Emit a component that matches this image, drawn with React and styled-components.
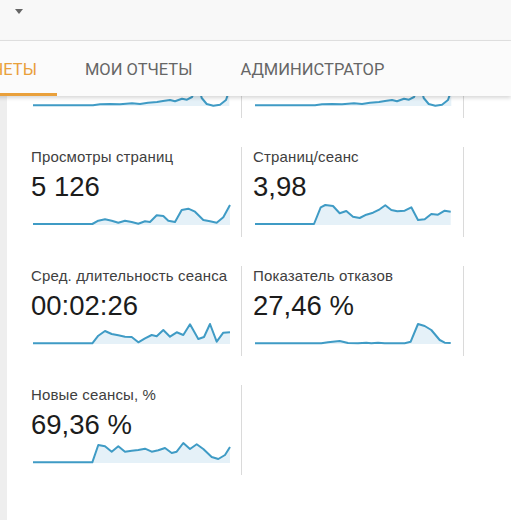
import React from "react";
import styled, { createGlobalStyle } from "styled-components";

const GlobalStyle = createGlobalStyle`
  html, body {
    margin: 0;
    padding: 0;
    background: #ffffff;
    font-family: "Liberation Sans", Arial, sans-serif;
  }
`;

const rowZeroLeft = [
  [0, 30.3], [60, 30.3], [67, 29.3], [77, 29], [87, 29.3], [99, 28.3], [107, 29],
  [115, 27.7], [124, 27], [130, 26], [137, 25], [142, 26.3], [149, 23.7], [154, 24.7],
  [159, 22], [162, 15], [166, 12], [168.7, 23], [173.7, 29], [180.3, 30.7],
  [187, 29.7], [193, 25], [196.3, 15],
];

const rowZeroRight = rowZeroLeft.map(([x, y]) => [x, y]);

const metrics = [
  { label: "Сеансы", value: "1 288", points: rowZeroLeft },
  { label: "Пользователи", value: "1 050", points: rowZeroRight },
  {
    label: "Просмотры страниц",
    value: "5 126",
    points: [
      [0, 30], [59.3, 30], [65.3, 26.7], [72, 25.3], [78.7, 26.7], [85.3, 28.7],
      [92, 26.7], [98.7, 28], [105.3, 29.7], [112, 27.3], [117, 28], [123.7, 21.3],
      [130.3, 22], [135.3, 26.7], [142, 28], [148.7, 16], [155.3, 14.7], [162, 17.7],
      [170.3, 26], [177, 27.3], [183.7, 28.7], [190.3, 23.3], [197, 11],
    ],
  },
  {
    label: "Страниц/сеанс",
    value: "3,98",
    points: [
      [0, 30], [59, 30], [65.7, 13.3], [70.3, 11], [78, 12], [84.7, 19.3], [91.3, 17],
      [98, 22.7], [104.7, 24], [111.3, 20.7], [118, 18.7], [124.7, 15.3], [130.3, 11.3],
      [136.3, 16], [142.3, 17.3], [149.7, 16.7], [156.3, 13.3], [163, 26], [169.7, 25.3],
      [176.3, 20], [183, 20.7], [189.7, 16.7], [195.7, 17.7],
    ],
  },
  {
    label: "Сред. длительность сеанса",
    value: "00:02:26",
    points: [
      [0, 30.3], [59.3, 30.3], [65.3, 22.7], [72, 18], [78.7, 21], [85.3, 22.3],
      [92, 23.7], [98.7, 24], [105.3, 29.3], [112, 25.3], [118.7, 22], [123.7, 23.3],
      [130.3, 17], [137, 23.7], [143.7, 19.3], [150.3, 22], [157, 11.3], [165.3, 26],
      [171, 24], [177, 11], [183.7, 28.7], [190.3, 19.7], [197, 19.3],
    ],
  },
  {
    label: "Показатель отказов",
    value: "27,46 %",
    points: [
      [0, 30.3], [66.3, 30.3], [73, 29.3], [84.7, 28], [93, 30], [103, 30.3],
      [111.3, 29.7], [116.3, 30.3], [123, 29.7], [129.7, 30.3], [149.7, 30.3],
      [155.7, 28.7], [163, 11], [169.7, 13], [176.3, 17], [184.7, 27], [189.7, 29.7],
      [195.7, 30],
    ],
  },
  {
    label: "Новые сеансы, %",
    value: "69,36 %",
    points: [
      [0, 30.3], [59.3, 30.3], [65.3, 13], [72, 14.3], [78.7, 19.7], [85.3, 14.3],
      [92, 19.7], [98.7, 18.7], [105.3, 18], [112, 16.7], [118.7, 19.7], [125.3, 18.3],
      [132, 16], [138.7, 21], [143.7, 19.7], [150.3, 11], [157, 17], [163.7, 12.3],
      [170.3, 17], [178.7, 25], [185.3, 27], [192, 23], [197, 15],
    ],
  },
];

const tabs = [
  { title: "Отчеты", active: true },
  { title: "Мои отчеты" },
  { title: "Администратор" },
];

const Sparkline = ({ points }) => {
  const line = points.map(([x, y], i) => `${i ? "L" : "M"}${x},${y}`).join(" ");
  const last = points[points.length - 1];
  const area = `${line} L${last[0]},31 L${points[0][0]},31 Z`;
  return (
    <SparkSvg width="198" height="26" viewBox="0 6 198 26">
      <path d={area} fill="#e5f1f8" />
      <path d={line} fill="none" stroke="#3f9bc5" strokeWidth="2" strokeLinejoin="round" />
    </SparkSvg>
  );
};

const App = () => {
  return (
    <Page>
      <GlobalStyle />
      <TopBar>
        <Caret />
      </TopBar>
      <TabBar>
        {tabs.map((t) => (
          <Tab key={t.title} $active={t.active}>
            {t.title}
          </Tab>
        ))}
      </TabBar>
      <Content>
        <Gutter />
        <Scroller>
          <Grid>
            {metrics.map((m) => (
              <Card key={m.label}>
                <Label>{m.label}</Label>
                <Value>{m.value}</Value>
                <Sparkline points={m.points} />
              </Card>
            ))}
          </Grid>
        </Scroller>
      </Content>
    </Page>
  );
};

const Page = styled.div`
  width: 511px;
  height: 520px;
  overflow: hidden;
  display: flex;
  flex-direction: column;
  background: #ffffff;
`;

const TopBar = styled.div`
  height: 41px;
  flex-shrink: 0;
  box-sizing: border-box;
  background: #f8f8f8;
  border-bottom: 1px solid #e2e2e2;
  padding: 9px 0 0 15px;
`;

const Caret = styled.span`
  display: block;
  width: 0;
  height: 0;
  border-left: 4.5px solid transparent;
  border-right: 4.5px solid transparent;
  border-top: 5px solid #666666;
`;

const TabBar = styled.nav`
  position: relative;
  z-index: 1;
  height: 55px;
  flex-shrink: 0;
  display: flex;
  gap: 8px;
  margin-left: -49px;
  background: #fbfbfb;
  box-shadow: 0 2px 4px rgba(0, 0, 0, 0.16);
`;

const Tab = styled.div`
  display: flex;
  align-items: center;
  padding: 5px 20px 0;
  font-family: Roboto, "Liberation Sans", sans-serif;
  font-size: 16.5px;
  text-transform: uppercase;
  white-space: nowrap;
  color: ${(p) => (p.$active ? "#e9a03b" : "#666666")};
  border-bottom: 3px solid ${(p) => (p.$active ? "#e9a03b" : "transparent")};
`;

const Content = styled.div`
  flex: 1;
  display: flex;
  overflow: hidden;
`;

const Gutter = styled.div`
  width: 7px;
  flex-shrink: 0;
  background: #eeeeee;
`;

const Scroller = styled.div`
  flex: 1;
  padding-left: 13px;
`;

const Grid = styled.div`
  display: grid;
  grid-template-columns: 222px 222px;
  row-gap: 29px;
  margin-top: -68px;
`;

const Card = styled.div`
  height: 90px;
  box-sizing: border-box;
  padding: 1px 12px 0 11px;
  border-right: 1px solid #dadada;
  display: flex;
  flex-direction: column;
`;

const Label = styled.div`
  font-size: 15px;
  line-height: 17px;
  letter-spacing: 0.15px;
  color: #404040;
  white-space: nowrap;
`;

const Value = styled.div`
  margin-top: 10px;
  font-size: 27.5px;
  line-height: 24px;
  color: #1c1c1c;
  white-space: nowrap;
`;

const SparkSvg = styled.svg`
  display: block;
  margin: 1px 0 0 2px;
  overflow: visible;
`;

export default App;
